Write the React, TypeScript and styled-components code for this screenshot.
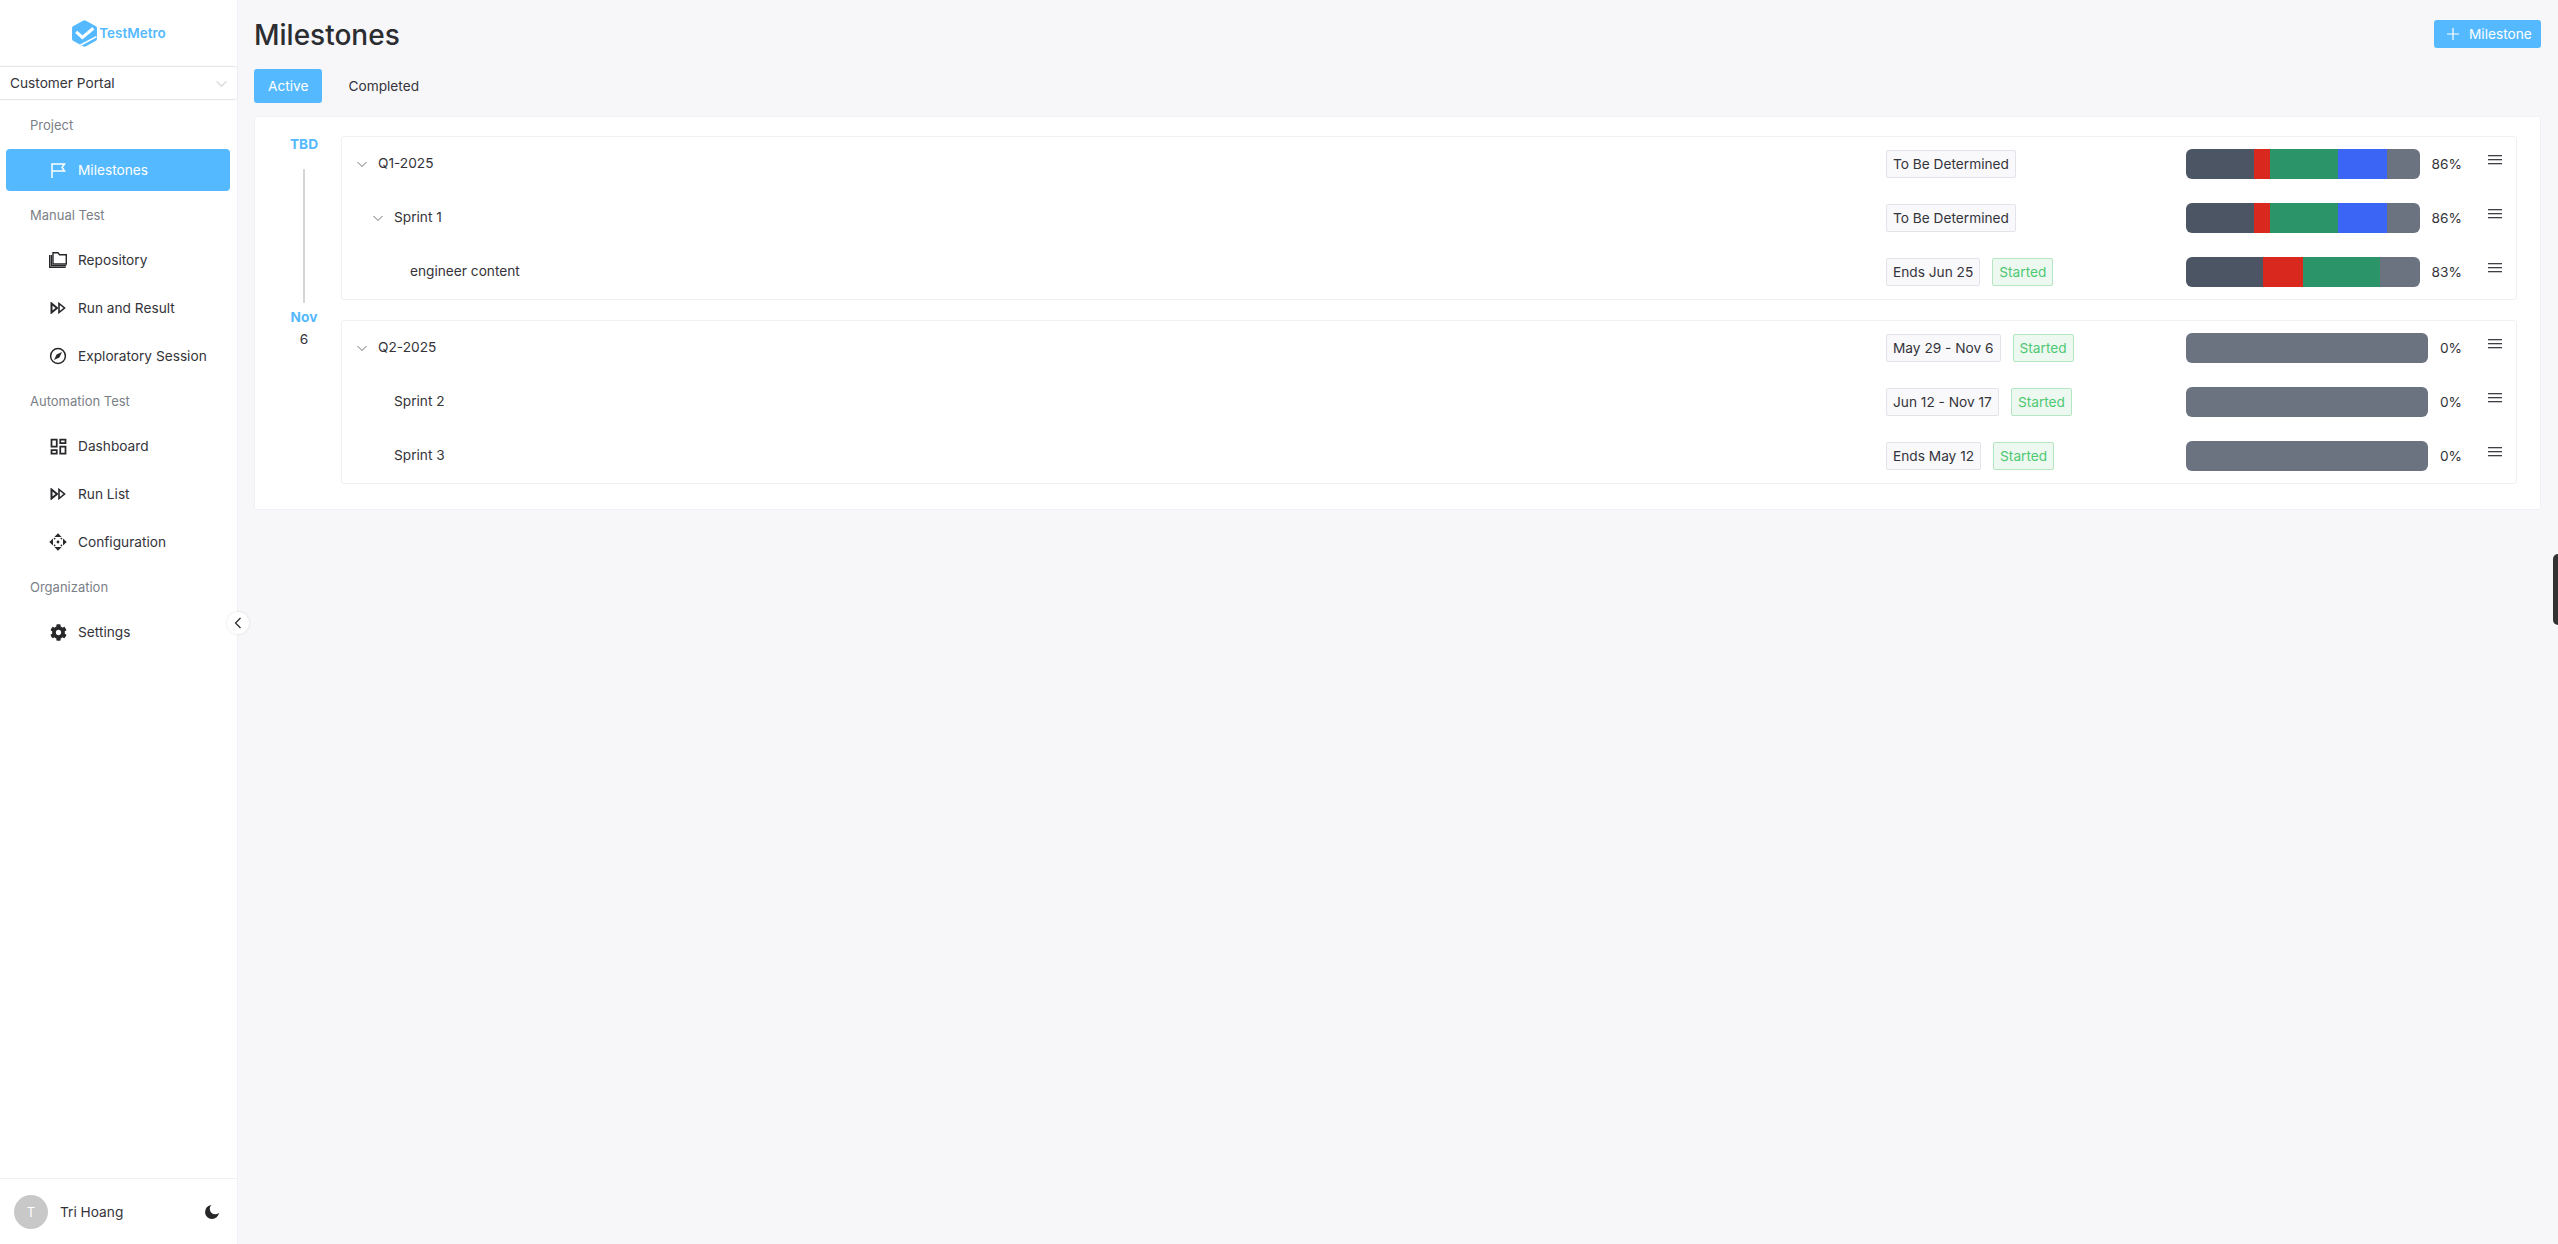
import React from 'react';
import styled, { createGlobalStyle } from 'styled-components';
import { FaCog } from 'react-icons/fa';
import { MdOutlineDashboard } from 'react-icons/md';

const BLUE = '#54b9ff';

interface Segment {
  color: string;
  width: number;
}

interface MilestoneRow {
  name: string;
  level: number;
  expandable?: boolean;
  date: string;
  started?: boolean;
  percent: number;
  segments: Segment[];
}

const dark = '#4b5563';
const red = '#d9281e';
const green = '#2b9569';
const blue = '#3b66f5';
const gray = '#6b7280';

const mixedA: Segment[] = [
  { color: dark, width: 68 },
  { color: red, width: 16 },
  { color: green, width: 68 },
  { color: blue, width: 49 },
  { color: gray, width: 33 },
];

const mixedB: Segment[] = [
  { color: dark, width: 77 },
  { color: red, width: 40 },
  { color: green, width: 77 },
  { color: gray, width: 40 },
];

const empty: Segment[] = [{ color: gray, width: 100 }];

const groups: MilestoneRow[][] = [
  [
    { name: 'Q1-2025', level: 0, expandable: true, date: 'To Be Determined', percent: 86, segments: mixedA },
    { name: 'Sprint 1', level: 1, expandable: true, date: 'To Be Determined', percent: 86, segments: mixedA },
    { name: 'engineer content', level: 2, date: 'Ends Jun 25', started: true, percent: 83, segments: mixedB },
  ],
  [
    { name: 'Q2-2025', level: 0, expandable: true, date: 'May 29 - Nov 6', started: true, percent: 0, segments: empty },
    { name: 'Sprint 2', level: 1, date: 'Jun 12 - Nov 17', started: true, percent: 0, segments: empty },
    { name: 'Sprint 3', level: 1, date: 'Ends May 12', started: true, percent: 0, segments: empty },
  ],
];

const Chevron = ({ size = 10, color = '#71717a' }: { size?: number; color?: string }) => (
  <svg width={size} height={size} viewBox="0 0 10 10" fill="none" stroke={color} strokeWidth="1">
    <path d="M0.5 3l4.5 4.5L9.5 3" />
  </svg>
);

const Logo = () => (
  <svg width="27" height="27" viewBox="0 0 26 26">
    <path
      d="M11.6.7a3 3 0 0 1 2.8 0l9.6 5.2a2 2 0 0 1 1 1.8v10.6a2 2 0 0 1-1 1.8l-9.6 5.2a3 3 0 0 1-2.8 0L2 20.1a2 2 0 0 1-1-1.8V7.7a2 2 0 0 1 1-1.8z"
      fill={BLUE}
    />
    <path d="M5 11.5l6 5.2L21.5 8" fill="none" stroke="#fff" strokeWidth="3" />
    <path d="M8.5 24.5l16-8.5" fill="none" stroke="#fff" strokeWidth="1.6" />
  </svg>
);

const FlagIcon = () => (
  <svg width="18" height="18" viewBox="0 0 18 18" fill="none" stroke="#fff" strokeWidth="1.5">
    <path d="M3 17V3h12.5l-2.5 3.5 2.5 3.5H3" />
  </svg>
);

const FoldersIcon = () => (
  <svg width="20" height="18" viewBox="0 0 20 18" fill="none" stroke="#27272a" strokeWidth="1.4">
    <path d="M5 13V1.7h5l1.5 2H18.3V13z" />
    <path d="M1.7 4v12.3h16" />
    <path d="M3.4 4v10.6h14.8" />
  </svg>
);

const ForwardIcon = () => (
  <svg width="16" height="12" viewBox="0 0 16 12" fill="none" stroke="#27272a" strokeWidth="1.6">
    <path d="M1.5 1.5v9L7 6z" strokeWidth="2" />
    <path d="M9 1.5v9L14.5 6z" />
  </svg>
);

const CompassIcon = () => (
  <svg width="18" height="18" viewBox="0 0 18 18">
    <circle cx="9" cy="9" r="7.4" fill="none" stroke="#27272a" strokeWidth="1.5" />
    <path d="M13 5l-2.6 5.4L5 13l2.6-5.4z" fill="#27272a" />
  </svg>
);

const ConfigIcon = () => (
  <svg width="18" height="18" viewBox="0 0 18 18" fill="#27272a">
    <path d="M9 .3L12.6 4H5.4z" />
    <path d="M9 17.7L5.4 14h7.2z" />
    <path d="M.3 9L4 5.4v7.2z" />
    <path d="M17.7 9L14 12.6V5.4z" />
    <circle cx="9" cy="9" r="1.4" />
    <circle cx="5.6" cy="5.6" r="0.9" />
    <circle cx="12.4" cy="5.6" r="0.9" />
    <circle cx="5.6" cy="12.4" r="0.9" />
    <circle cx="12.4" cy="12.4" r="0.9" />
  </svg>
);

const MoonIcon = () => (
  <svg width="16" height="16" viewBox="0 0 24 24" fill="#27272a">
    <path d="M11 1.5a10.5 10.5 0 1 0 11.5 11.5 8 8 0 0 1-11.5-11.5z" />
  </svg>
);

const MenuIcon = () => (
  <svg width="14" height="10" viewBox="0 0 14 10" fill="#3f3f46">
    <rect y="0" width="14" height="1.3" />
    <rect y="4" width="14" height="1.3" />
    <rect y="8" width="14" height="1.3" />
  </svg>
);

const sections = [
  { title: 'Project', items: [{ label: 'Milestones', icon: <FlagIcon />, active: true }] },
  {
    title: 'Manual Test',
    items: [
      { label: 'Repository', icon: <FoldersIcon /> },
      { label: 'Run and Result', icon: <ForwardIcon /> },
      { label: 'Exploratory Session', icon: <CompassIcon /> },
    ],
  },
  {
    title: 'Automation Test',
    items: [
      { label: 'Dashboard', icon: <MdOutlineDashboard size={21} color="#27272a" /> },
      { label: 'Run List', icon: <ForwardIcon /> },
      { label: 'Configuration', icon: <ConfigIcon /> },
    ],
  },
  { title: 'Organization', items: [{ label: 'Settings', icon: <FaCog size={17} color="#27272a" /> }] },
];

const Row: React.FC<{ row: MilestoneRow }> = ({ row }) => (
  <RowGrid>
    <NameCell $level={row.level}>
      {row.expandable && (
        <Caret>
          <Chevron />
        </Caret>
      )}
      <span>{row.name}</span>
    </NameCell>
    <TagCell>
      <DateTag>{row.date}</DateTag>
      {row.started && <StatusTag>Started</StatusTag>}
    </TagCell>
    <ProgressCell>
      <Bar>
        {row.segments.map((s, i) => (
          <Piece key={i} $color={s.color} $grow={s.width} />
        ))}
      </Bar>
      <Percent>{row.percent}%</Percent>
    </ProgressCell>
    <MenuCell>
      <MenuIcon />
    </MenuCell>
  </RowGrid>
);

const App: React.FC = () => (
  <Page>
    <GlobalStyle />
    <Sidebar>
      <Brand>
        <Logo />
        <BrandName>TestMetro</BrandName>
      </Brand>
      <ProjectSelect>
        <span>Customer Portal</span>
        <Chevron size={11} color="#d4d4d8" />
      </ProjectSelect>
      <Nav>
        {sections.map(section => (
          <React.Fragment key={section.title}>
            <SectionLabel>{section.title}</SectionLabel>
            <NavList>
              {section.items.map(item => (
                <NavItem key={item.label} $active={'active' in item}>
                  <NavIcon>{item.icon}</NavIcon>
                  {item.label}
                </NavItem>
              ))}
            </NavList>
          </React.Fragment>
        ))}
      </Nav>
      <Footer>
        <Avatar>T</Avatar>
        <UserName>Tri Hoang</UserName>
        <MoonIcon />
      </Footer>
      <CollapseButton>
        <svg width="8" height="12" viewBox="0 0 8 12" fill="none" stroke="#27272a" strokeWidth="1.2">
          <path d="M6.5 1L1.5 6l5 5" />
        </svg>
      </CollapseButton>
    </Sidebar>
    <Main>
      <Header>
        <Title>Milestones</Title>
        <AddButton>
          <svg width="12" height="12" viewBox="0 0 12 12" stroke="#fff" strokeWidth="1.2">
            <path d="M6 0v12M0 6h12" />
          </svg>
          Milestone
        </AddButton>
      </Header>
      <Tabs>
        <Tab $active>Active</Tab>
        <Tab>Completed</Tab>
      </Tabs>
      <Card>
        <Timeline>
          <TimelineMonth>TBD</TimelineMonth>
          <TimelineLine />
          <TimelineMonth>Nov</TimelineMonth>
          <TimelineDay>6</TimelineDay>
        </Timeline>
        <Groups>
          {groups.map((rows, i) => (
            <Group key={i}>
              {rows.map(row => (
                <Row key={row.name} row={row} />
              ))}
            </Group>
          ))}
        </Groups>
      </Card>
    </Main>
    <EdgeHandle />
  </Page>
);

export default App;

const GlobalStyle = createGlobalStyle`
  html, body {
    margin: 0;
    padding: 0;
    overflow: hidden;
  }
  * {
    box-sizing: border-box;
  }
  body {
    font-family: Inter, "Liberation Sans", sans-serif;
    font-size: 13.7px;
    color: #34343a;
  }
`;

const Page = styled.div`
  display: flex;
  height: 1244px;
  background-color: #f7f7fa;
`;

const Sidebar = styled.aside`
  position: relative;
  flex: 0 0 238px;
  display: flex;
  flex-direction: column;
  background-color: #fff;
  border-right: 1px solid #f0f0f5;
`;

const Brand = styled.div`
  height: 66px;
  display: flex;
  align-items: center;
  justify-content: center;
  gap: 1px;
`;

const BrandName = styled.span`
  font-size: 13.5px;
  font-weight: 600;
  color: ${BLUE};
`;

const ProjectSelect = styled.div`
  height: 34px;
  display: flex;
  align-items: center;
  justify-content: space-between;
  padding: 0 10px;
  border-top: 1px solid #e4e4ea;
  border-bottom: 1px solid #e4e4ea;
  border-radius: 0 3px 3px 0;
  box-shadow: 0 0 1px rgba(0, 0, 0, 0.12);
`;

const Nav = styled.nav`
  flex: 1;
  padding-top: 1px;
`;

const SectionLabel = styled.div`
  padding: 14px 30px;
  line-height: 20px;
  font-size: 13px;
  color: #7b7f87;
`;

const NavList = styled.div`
  display: flex;
  flex-direction: column;
  gap: 6px;
`;

const NavItem = styled.div<{ $active?: boolean }>`
  height: 42px;
  margin: 0 7px 0 6px;
  padding-left: 41px;
  display: flex;
  align-items: center;
  gap: 9px;
  border-radius: 4px;
  background-color: ${props => (props.$active ? BLUE : 'transparent')};
  color: ${props => (props.$active ? '#fff' : '#34343a')};
`;

const NavIcon = styled.span`
  width: 22px;
  display: flex;
  align-items: center;
  justify-content: center;
`;

const Footer = styled.div`
  height: 66px;
  display: flex;
  align-items: center;
  padding: 0 17px 0 14px;
  border-top: 1px solid #f0f0f5;
`;

const Avatar = styled.div`
  width: 34px;
  height: 34px;
  border-radius: 50%;
  display: flex;
  align-items: center;
  justify-content: center;
  background-color: #c8c8c8;
  color: #fff;
  font-size: 13px;
`;

const UserName = styled.span`
  flex: 1;
  margin-left: 12px;
`;

const CollapseButton = styled.div`
  position: absolute;
  top: 612px;
  left: 227px;
  width: 22px;
  height: 22px;
  border-radius: 50%;
  background-color: #fff;
  box-shadow: 0 0 3px rgba(0, 0, 0, 0.12);
  display: flex;
  align-items: center;
  justify-content: center;
  z-index: 2;
`;

const Main = styled.main`
  flex: 1;
  min-width: 0;
  padding: 20px 17px 0 16px;
`;

const Header = styled.header`
  height: 28px;
  display: flex;
  align-items: center;
  justify-content: space-between;
  margin-bottom: 21px;
`;

const Title = styled.h1`
  margin: 1px 0 0;
  font-size: 28px;
  line-height: 28px;
  font-weight: 500;
  color: #2b2d31;
`;

const AddButton = styled.button`
  height: 28px;
  width: 107px;
  display: flex;
  align-items: center;
  gap: 10px;
  padding: 0 0 0 13px;
  border: 0;
  border-radius: 3px;
  background-color: ${BLUE};
  color: #fff;
  font: inherit;
`;

const Tabs = styled.div`
  display: flex;
  gap: 12px;
  margin-bottom: 13px;
`;

const Tab = styled.div<{ $active?: boolean }>`
  height: 34px;
  padding: 0 14px;
  display: flex;
  align-items: center;
  border-radius: 3px;
  background-color: ${props => (props.$active ? BLUE : 'transparent')};
  color: ${props => (props.$active ? '#fff' : '#34343a')};
`;

const Card = styled.section`
  display: flex;
  padding: 19px 23px 25px 12px;
  background-color: #fff;
  border: 1px solid #f0f0f5;
  border-radius: 3px;
`;

const Timeline = styled.div`
  flex: 0 0 74px;
  display: flex;
  flex-direction: column;
  align-items: center;
  margin-top: -2px;
`;

const TimelineMonth = styled.div`
  line-height: 20px;
  font-weight: 700;
  color: ${BLUE};
`;

const TimelineLine = styled.div`
  width: 2px;
  height: 134px;
  margin: 15px 0 4px;
  background-color: #d4d4d8;
`;

const TimelineDay = styled.div`
  margin-top: 2px;
  line-height: 20px;
`;

const Groups = styled.div`
  flex: 1;
  min-width: 0;
  display: flex;
  flex-direction: column;
  gap: 20px;
`;

const Group = styled.div`
  border: 1px solid #f0f0f5;
  border-radius: 3px;
`;

const RowGrid = styled.div`
  height: 54px;
  display: grid;
  grid-template-columns: 1fr 300px 276px 54px;
  align-items: center;
`;

const NameCell = styled.div<{ $level: number }>`
  position: relative;
  padding: 0 0 2px ${props => 36 + props.$level * 16}px;
  display: flex;
  align-items: center;
`;

const Caret = styled.span`
  position: absolute;
  margin-left: -21px;
  margin-top: 2px;
  display: flex;
`;

const TagCell = styled.div`
  display: flex;
  gap: 12px;
`;

const DateTag = styled.span`
  height: 28px;
  padding: 0 6px;
  display: flex;
  align-items: center;
  background-color: #f9f9fc;
  border: 1px solid #e3e3ea;
  border-radius: 2px;
`;

const StatusTag = styled(DateTag)`
  background-color: #edf8f0;
  border-color: #b5e6c3;
  color: #4fc873;
`;

const ProgressCell = styled.div`
  display: flex;
  align-items: center;
  gap: 12px;
`;

const Bar = styled.div`
  flex: 1;
  height: 30px;
  display: flex;
  border-radius: 6px;
  overflow: hidden;
`;

const Piece = styled.div<{ $color: string; $grow: number }>`
  flex: ${props => props.$grow} 0 0;
  background-color: ${props => props.$color};
`;

const Percent = styled.span`
  line-height: 20px;
`;

const MenuCell = styled.div`
  display: flex;
  justify-content: flex-end;
  padding: 0 14px 8px 0;
`;

const EdgeHandle = styled.div`
  position: absolute;
  top: 554px;
  right: 0;
  width: 5px;
  height: 71px;
  background-color: #333;
  border-radius: 6px 0 0 6px;
`;
